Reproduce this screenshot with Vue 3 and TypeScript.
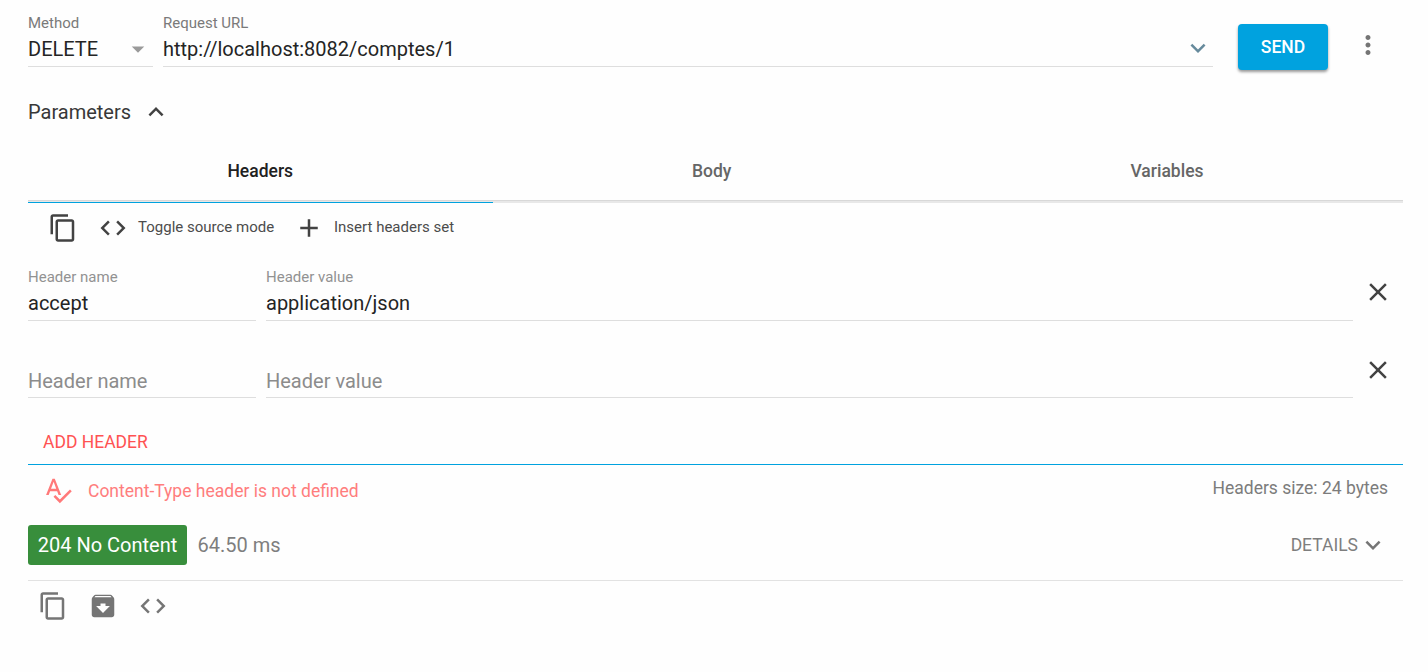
<script setup lang="ts">
import { ref } from 'vue'

interface HeaderRow {
  name: string
  value: string
}

const icons = {
  copy: 'M16 1H4c-1.1 0-2 .9-2 2v14h2V3h12V1zm3 4H8c-1.1 0-2 .9-2 2v14c0 1.1.9 2 2 2h11c1.100 0 2-.9 2-2V7c0-1.100-.9-2-2-2zm0 16H8V7h11v14z',
  code: 'M9.400 16.600L4.800 12l4.600-4.600L8 6l-6 6 6 6 1.400-1.400zm5.200 0l4.600-4.600-4.600-4.600L16 6l6 6-6 6-1.400-1.400z',
  add: 'M19 13h-6v6h-2v-6H5v-2h6V5h2v6h6v2z',
  close: 'M19 6.410L17.590 5 12 10.590 6.410 5 5 6.410 10.590 12 5 17.590 6.410 19 12 13.410 17.590 19 19 17.590 13.410 12z',
  more: 'M12 8c1.100 0 2-.9 2-2s-.9-2-2-2-2 .9-2 2 .9 2 2 2zm0 2c-1.100 0-2 .9-2 2s.9 2 2 2 2-.9 2-2-.9-2-2-2zm0 6c-1.100 0-2 .9-2 2s.9 2 2 2 2-.9 2-2-.9-2-2-2z',
  down: 'M16.590 8.590L12 13.170 7.410 8.590 6 10l6 6 6-6z',
  up: 'M12 8l-6 6 1.410 1.410L12 10.830l4.590 4.580L18 14z',
  drop: 'M7 10l5 5 5-5z',
  spell: 'M12.450 16h2.090L9.430 3H7.570L2.460 16h2.090l1.120-3h5.640l1.140 3zm-6.020-5L8.500 5.480 10.570 11H6.430zm15.160.59l-8.090 8.090L9.830 16l-1.410 1.410 5.090 5.090L23 13l-1.410-1.410z',
  archive: 'M20.540 5.230l-1.390-1.680C18.880 3.210 18.470 3 18 3H6c-.47 0-.88.21-1.160.55L3.460 5.230C3.170 5.570 3 6.020 3 6.500V19c0 1.100.9 2 2 2h14c1.100 0 2-.9 2-2V6.500c0-.48-.17-.93-.46-1.270zM12 17.500L6.500 12H10v-2h4v2h3.500L12 17.500zM5.120 5l.81-1h12l.94 1H5.120z',
}

const tabs = ['Headers', 'Body', 'Variables']
const activeTab = ref(0)
const rows = ref<HeaderRow[]>([
  { name: 'accept', value: 'application/json' },
  { name: '', value: '' },
])
</script>

<template>
  <main class="page">
    <section class="request">
      <div class="field method">
        <label>Method</label>
        <div class="value">
          <span>DELETE</span>
          <svg class="icon drop" viewBox="0 0 24 24"><path :d="icons.drop" /></svg>
        </div>
      </div>
      <div class="field url">
        <label>Request URL</label>
        <div class="value">
          <span>http://localhost:8082/comptes/1</span>
          <svg class="icon expand" viewBox="0 0 24 24"><path :d="icons.down" /></svg>
        </div>
      </div>
      <button class="send">SEND</button>
      <svg class="icon more" viewBox="0 0 24 24"><path :d="icons.more" /></svg>
    </section>

    <div class="parameters">
      <span>Parameters</span>
      <svg class="icon" viewBox="0 0 24 24"><path :d="icons.up" /></svg>
    </div>

    <nav class="tabs">
      <div
        v-for="(tab, i) in tabs"
        :key="tab"
        class="tab"
        :class="{ active: i === activeTab }"
        @click="activeTab = i"
      >
        {{ tab }}
      </div>
    </nav>

    <div class="tools">
      <svg class="icon" viewBox="0 0 24 24"><path :d="icons.copy" /></svg>
      <svg class="icon code" viewBox="0 0 24 24"><path :d="icons.code" /></svg>
      <span class="toggle">Toggle source mode</span>
      <svg class="icon" viewBox="0 0 24 24"><path :d="icons.add" /></svg>
      <span class="insert">Insert headers set</span>
    </div>

    <div v-for="(row, i) in rows" :key="i" class="header-row" :class="{ empty: !row.name }">
      <div class="field name">
        <label v-if="row.name">Header name</label>
        <div class="value">{{ row.name || 'Header name' }}</div>
      </div>
      <div class="field content">
        <label v-if="row.name">Header value</label>
        <div class="value">{{ row.value || 'Header value' }}</div>
      </div>
      <svg class="icon remove" viewBox="0 0 24 24"><path :d="icons.close" /></svg>
    </div>

    <div class="add"><span>ADD HEADER</span></div>

    <div class="summary">
      <svg class="icon" viewBox="0 0 24 24"><path :d="icons.spell" /></svg>
      <span class="warning">Content-Type header is not defined</span>
      <span class="size">Headers size: 24 bytes</span>
    </div>

    <div class="response">
      <span class="status">204 No Content</span>
      <span class="time">64.50 ms</span>
      <span class="details">DETAILS</span>
      <svg class="icon" viewBox="0 0 24 24"><path :d="icons.down" /></svg>
    </div>

    <div class="actions">
      <svg class="icon" viewBox="0 0 24 24"><path :d="icons.copy" /></svg>
      <svg class="icon" viewBox="0 0 24 24"><path :d="icons.archive" /></svg>
      <svg class="icon" viewBox="0 0 24 24"><path :d="icons.code" /></svg>
    </div>
  </main>
</template>

<style>
body {
  margin: 0;
  background: #fefefe;
}
</style>

<style scoped>
.page {
  box-sizing: border-box;
  height: 672px;
  padding: 0 25px 0 28px;
  overflow: hidden;
  background: #fefefe;
  color: #242424;
  font-family: Roboto, 'Liberation Sans', sans-serif;
  font-size: 20px;
  white-space: nowrap;
}
.icon {
  display: block;
  flex: none;
  width: 30px;
  height: 30px;
  fill: #424242;
}
.request {
  display: flex;
  height: 97px;
}
.field {
  box-sizing: border-box;
  flex: none;
}
.field label {
  display: block;
  height: 20px;
  line-height: 20px;
  font-size: 15px;
  color: #7a7a7a;
}
.field .value {
  display: flex;
  justify-content: space-between;
  height: 33px;
  line-height: 33px;
  border-bottom: 1px solid #dedede;
}
.request .field {
  padding-top: 13px;
}
.method {
  width: 125px;
  margin-right: 10px;
}
.url {
  width: 1050px;
}
.icon.drop {
  margin-top: 1px;
  fill: #9a9a9a;
}
.icon.expand {
  fill: #668a9c;
}
.send {
  flex: none;
  width: 90px;
  height: 46px;
  margin: 24px 25px 0 25px;
  padding: 0;
  border: 0;
  border-radius: 4px;
  background: #00a2df;
  box-shadow: 0 2px 3px rgba(0, 0, 0, 0.4);
  color: #fff;
  font: 500 17.5px/46px Roboto, sans-serif;
}
.icon.more {
  margin-top: 30px;
  fill: #757575;
}
.parameters {
  display: flex;
  gap: 10px;
  height: 43px;
  line-height: 30px;
  color: #383838;
}
.tabs {
  display: grid;
  grid-template-columns: 464.5px 438.5px 472px;
  height: 63px;
  background: linear-gradient(#d8d8d8 0 1px, #e8e8e8 1px 3px) bottom / 100% 3px no-repeat;
}
.tab {
  box-sizing: border-box;
  height: 63px;
  line-height: 62px;
  text-align: center;
  font-size: 17.5px;
  font-weight: 500;
  color: #666;
}
.tab.active {
  border-bottom: 1px solid #00a2df;
  color: #212121;
}
.tools {
  display: flex;
  height: 64px;
  padding: 10px 0 0 20px;
  box-sizing: border-box;
  font-size: 15px;
  line-height: 28px;
  color: #4c4c4c;
}
.code {
  margin-left: 20px;
}
.toggle {
  width: 156px;
  margin-left: 10px;
}
.insert {
  margin-left: 10px;
}
.header-row {
  display: flex;
  height: 78px;
}
.header-row label {
  color: #929292;
}
.name {
  width: 228px;
  margin-right: 10px;
}
.content {
  width: 1087px;
}
.remove {
  margin: 10px 0 0 10px;
}
.empty .field {
  padding-top: 19px;
  color: #8c8c8c;
}
.empty .value {
  line-height: 35px;
}
.add {
  box-sizing: border-box;
  height: 42px;
  padding-left: 15px;
  border-bottom: 1px solid #00a2df;
  font-size: 17.5px;
  line-height: 38px;
  color: #ff5252;
}
.summary {
  display: flex;
  box-sizing: border-box;
  height: 60px;
  padding: 10px 15px 0;
  font-size: 17.5px;
  line-height: 32px;
  color: #ff7d7d;
}
.summary .icon {
  fill: #ff7979;
}
.warning {
  margin-left: 15px;
}
.size {
  margin-left: auto;
  line-height: 26px;
  color: #7c7c7c;
}
.response {
  display: flex;
  box-sizing: border-box;
  height: 56px;
  padding-right: 15px;
  border-bottom: 1px solid #e2e2e2;
  line-height: 40px;
  color: #7e7e7e;
}
.status {
  width: 159px;
  height: 40px;
  border-radius: 3px;
  background: #388e3c;
  color: #fff;
  text-align: center;
}
.time {
  margin-left: 10.5px;
}
.details {
  margin-left: auto;
  font-size: 17.5px;
}
.response .icon {
  margin-top: 5px;
  fill: #757575;
}
.actions {
  display: flex;
  gap: 20px;
  padding: 10px 0 0 10px;
}
.actions .icon {
  fill: #757575;
}
</style>
